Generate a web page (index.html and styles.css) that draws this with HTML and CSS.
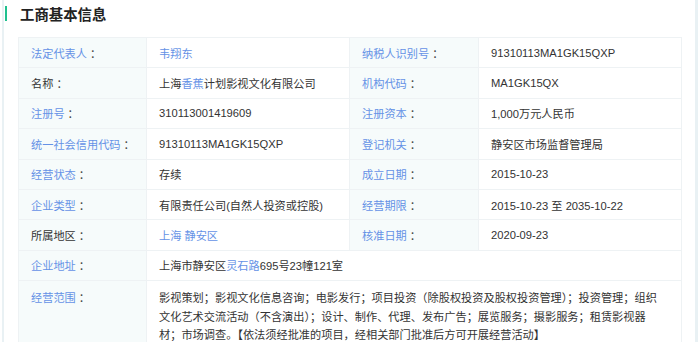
FILE: index.html
```html
<!DOCTYPE html>
<html lang="zh-CN">
<head>
<meta charset="utf-8">
<title>工商基本信息</title>
<link rel="stylesheet" href="styles.css">
</head>
<body>
<div class="page">
  <div class="rail rail-left"></div>
  <main class="content">
    <h2 class="title"><span class="title-bar"></span>工商基本信息</h2>
    <table class="info">
      <colgroup>
        <col class="c-label"><col class="c-value"><col class="c-label2"><col class="c-value">
      </colgroup>
      <tr>
        <td class="label"><span class="link">法定代表人</span><span class="colon">：</span></td>
        <td class="value"><span class="link">韦翔东</span></td>
        <td class="label"><span class="link">纳税人识别号</span><span class="colon">：</span></td>
        <td class="value">91310113MA1GK15QXP</td>
      </tr>
      <tr>
        <td class="label">名称<span class="colon">：</span></td>
        <td class="value">上海<span class="link">香蕉</span>计划影视文化有限公司</td>
        <td class="label"><span class="link">机构代码</span><span class="colon">：</span></td>
        <td class="value">MA1GK15QX</td>
      </tr>
      <tr>
        <td class="label"><span class="link">注册号</span><span class="colon">：</span></td>
        <td class="value">310113001419609</td>
        <td class="label"><span class="link">注册资本</span><span class="colon">：</span></td>
        <td class="value">1,000万元人民币</td>
      </tr>
      <tr>
        <td class="label"><span class="link">统一社会信用代码</span><span class="colon">：</span></td>
        <td class="value">91310113MA1GK15QXP</td>
        <td class="label"><span class="link">登记机关</span><span class="colon">：</span></td>
        <td class="value">静安区市场监督管理局</td>
      </tr>
      <tr>
        <td class="label"><span class="link">经营状态</span><span class="colon">：</span></td>
        <td class="value">存续</td>
        <td class="label"><span class="link">成立日期</span><span class="colon">：</span></td>
        <td class="value">2015-10-23</td>
      </tr>
      <tr>
        <td class="label"><span class="link">企业类型</span><span class="colon">：</span></td>
        <td class="value">有限责任公司(自然人投资或控股)</td>
        <td class="label"><span class="link">经营期限</span><span class="colon">：</span></td>
        <td class="value">2015-10-23 至 2035-10-22</td>
      </tr>
      <tr>
        <td class="label">所属地区<span class="colon">：</span></td>
        <td class="value"><span class="link">上海 静安区</span></td>
        <td class="label"><span class="link">核准日期</span><span class="colon">：</span></td>
        <td class="value">2020-09-23</td>
      </tr>
      <tr>
        <td class="label"><span class="link">企业地址</span><span class="colon">：</span></td>
        <td class="value" colspan="3">上海市静安区<span class="link">灵石路</span>695号23幢121室</td>
      </tr>
      <tr class="tall">
        <td class="label"><span class="link">经营范围</span><span class="colon">：</span></td>
        <td class="value" colspan="3">影视策划；影视文化信息咨询；电影发行；项目投资（除股权投资及股权投资管理）；投资管理；组织文化艺术交流活动（不含演出）；设计、制作、代理、发布广告；展览服务；摄影服务；租赁影视器材；市场调查。【依法须经批准的项目，经相关部门批准后方可开展经营活动】</td>
      </tr>
    </table>
  </main>
  <div class="rail rail-right"></div>
</div>
</body>
</html>
```

FILE: styles.css
```css
html, body {
  margin: 0;
  padding: 0;
  background: #ffffff;
}

body {
  font-family: "Liberation Sans", "Noto Sans CJK SC", sans-serif;
  font-size: 11.2px;
  color: #333333;
  overflow: hidden;
}

.page {
  display: flex;
  height: 342px;
  padding-left: 2px;
}

.rail {
  flex: none;
  background: #e9f1f4;
}

.rail-left {
  width: 2px;
}

.rail-right {
  width: 3px;
  margin-left: 14px;
  margin-right: 2px;
}

.content {
  flex: 1;
  min-width: 0;
  padding-left: 14px;
}

.title {
  display: flex;
  align-items: center;
  gap: 13px;
  margin: 0 0 0 -13px;
  height: 27px;
  font-size: 14.4px;
  font-weight: bold;
  color: #222222;
}

.title-bar {
  display: block;
  flex: none;
  width: 2px;
  height: 15px;
  background: #1fc08e;
}

.info {
  margin-top: 10px;
  width: 664px;
  border-collapse: collapse;
  table-layout: fixed;
}

.c-label { width: 128px; }
.c-label2 { width: 129px; }
.c-value { width: 203px; }

.info td {
  border: 1px solid #eef2f4;
  height: 30.4px;
  padding: 0 12px;
  box-sizing: border-box;
  vertical-align: middle;
  white-space: nowrap;
}

.info td.label {
  background: #f6fbfb;
}

.colon {
  color: #444444;
  padding-left: 3px;
}

.link {
  color: #6592e6;
}

.info tr.tall td {
  vertical-align: top;
  white-space: normal;
  padding-top: 8px;
  padding-bottom: 8px;
  padding-right: 16px;
  line-height: 18.4px;
}
```
